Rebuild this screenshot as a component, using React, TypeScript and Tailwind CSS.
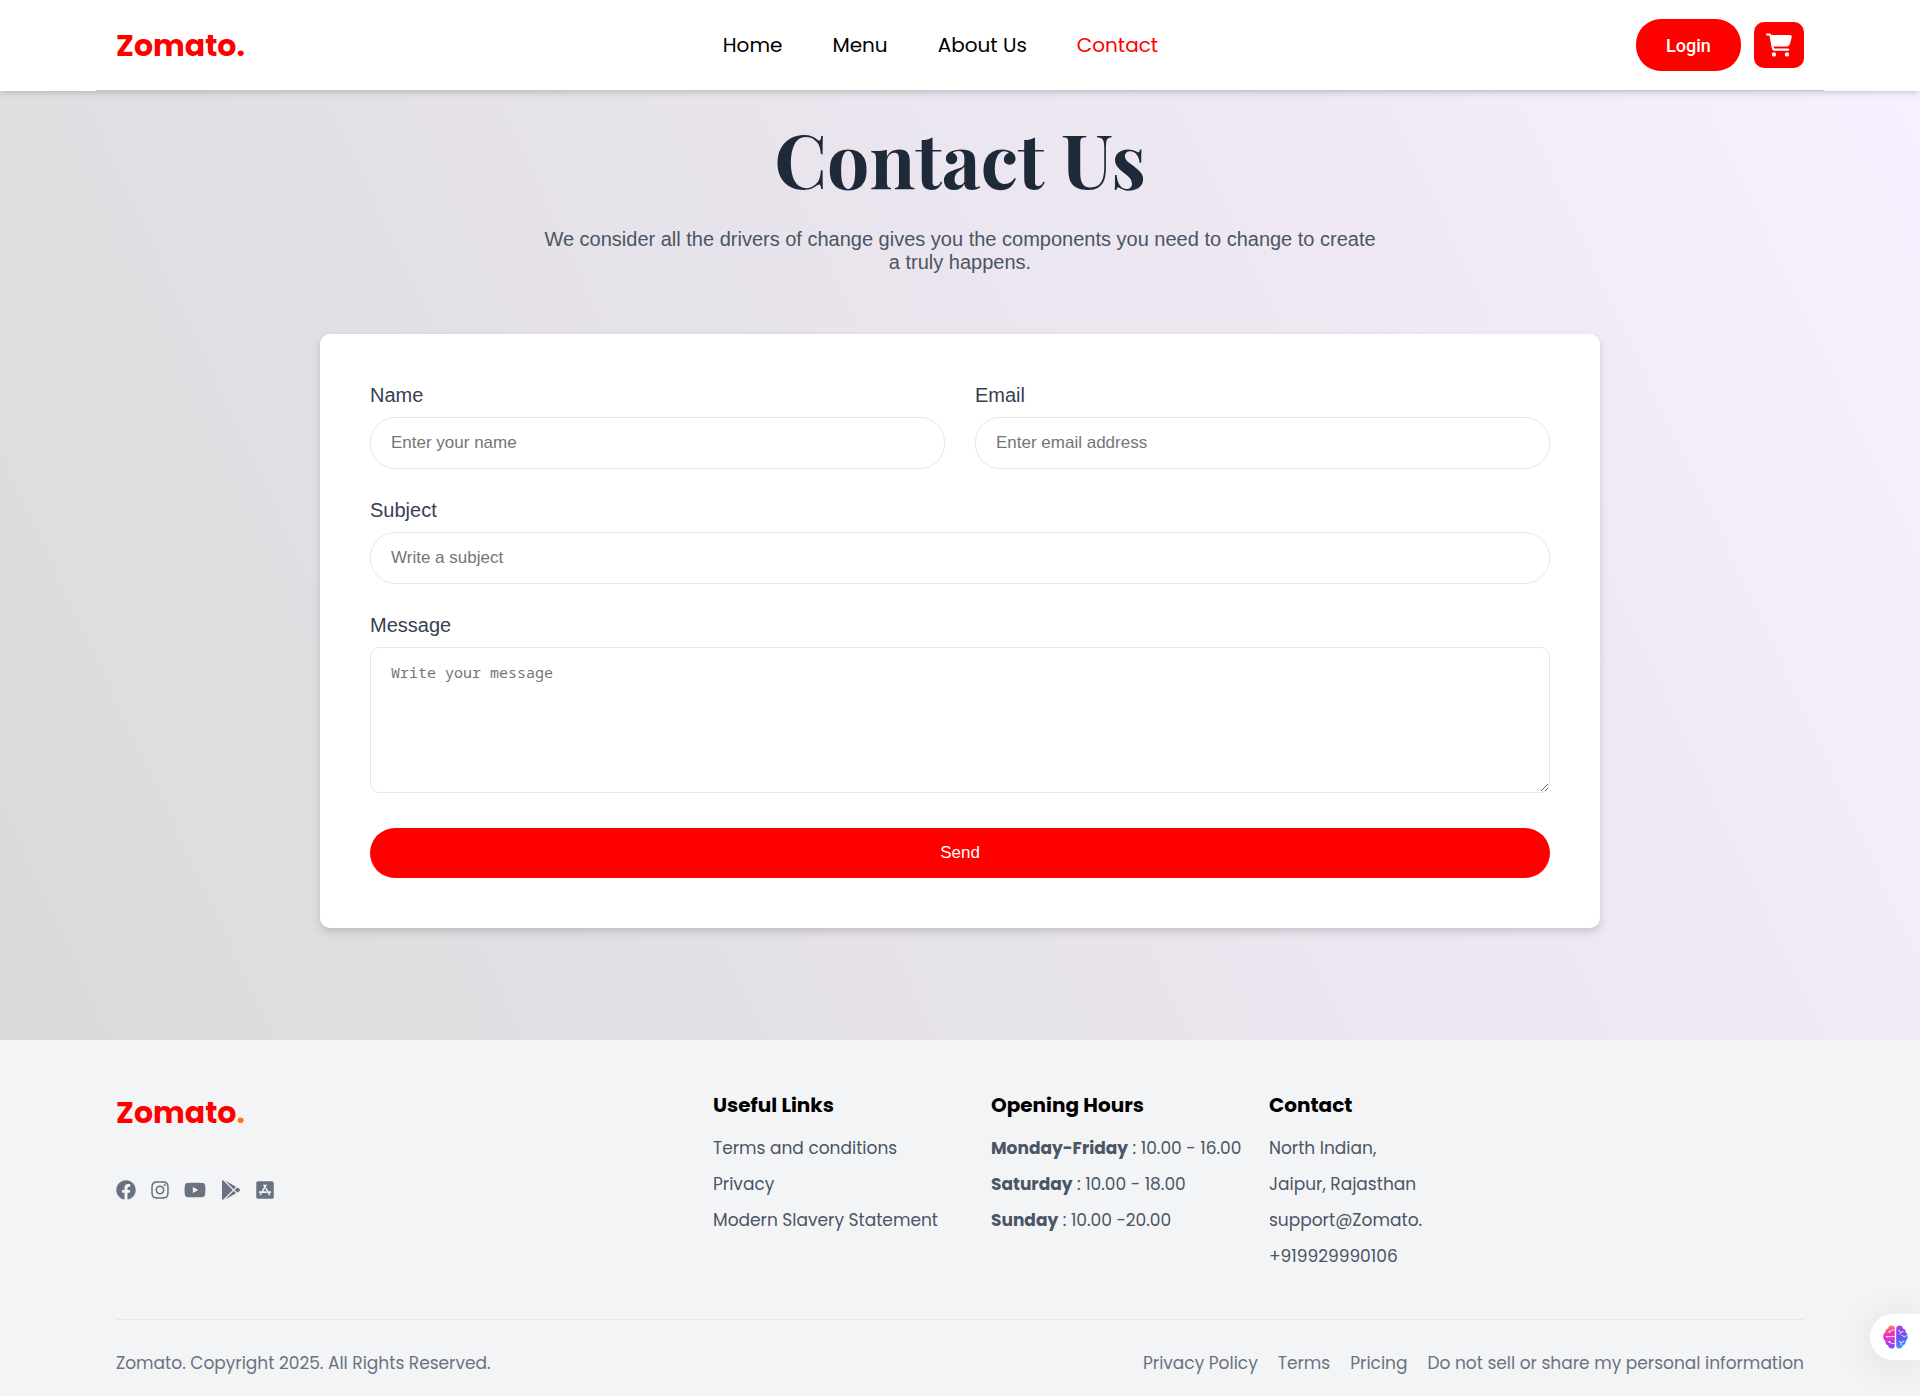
import type { ReactNode } from "react";
import { FaFacebook, FaInstagram, FaYoutube, FaGooglePlay, FaAppStoreIos } from "react-icons/fa";
import { FaCartShopping } from "react-icons/fa6";

const navLinks = ["Home", "Menu", "About Us", "Contact"];
const legalLinks = ["Privacy Policy", "Terms", "Pricing", "Do not sell or share my personal information"];
const usefulLinks = ["Terms and conditions", "Privacy", "Modern Slavery Statement"];
const hours = [
  ["Monday-Friday", " : 10.00 - 16.00"],
  ["Saturday", " : 10.00 - 18.00"],
  ["Sunday", " : 10.00 -20.00"],
];
const address = ["North Indian,", "Jaipur, Rajasthan", "support@Zomato.", "+919929990106"];
const socials = [
  { label: "Facebook", icon: <FaFacebook className="h-5 w-5" /> },
  { label: "Instagram", icon: <FaInstagram className="h-5 w-[18px]" /> },
  { label: "YouTube", icon: <FaYoutube className="h-5 w-[22px]" /> },
  { label: "Google Play", icon: <FaGooglePlay className="h-5 w-5" /> },
  { label: "App Store", icon: <FaAppStoreIos className="h-5 w-[18px]" /> },
];

function Header() {
  return (
    <header className="relative z-10 bg-white shadow-md">
      <div className="mx-24 flex h-[91px] items-center justify-between border-b border-[#c8c8c8] px-5">
        <a href="#" className="text-[30px] font-bold text-[#ff0000]">Zomato.</a>
        <nav className="flex gap-[50px] text-[20px]">
          {navLinks.map((l) => (
            <a key={l} href="#" className={l === "Contact" ? "text-[#ff0000]" : "text-black"}>{l}</a>
          ))}
        </nav>
        <div className="flex items-center gap-[13px]">
          <button className="h-[52px] w-[105px] rounded-[25px] bg-[#ff0000] font-[Roboto,sans-serif] text-[18px] font-medium text-white">Login</button>
          <button aria-label="Cart" className="flex h-[46px] w-[50px] items-center justify-center rounded-[10px] bg-[#ff0000] text-white">
            <FaCartShopping size={26} />
          </button>
        </div>
      </div>
    </header>
  );
}

const labelClass = "mb-[10px] block text-[20px] leading-[23px] text-gray-700";

function Field({ id, label, placeholder, type = "text" }: { id: string; label: string; placeholder: string; type?: string }) {
  return (
    <div>
      <label htmlFor={id} className={labelClass}>{label}</label>
      <input
        id={id}
        type={type}
        placeholder={placeholder}
        className="h-[52px] w-full rounded-[25px] border border-gray-200 bg-white px-5 text-[17px] text-gray-800 placeholder:text-[#757575]"
      />
    </div>
  );
}

function ContactSection() {
  return (
    <main className="bg-[linear-gradient(65deg,#dadada,#f0e9f5_75%,#f7f1ff)] px-5 pt-5 pb-28 font-['Liberation_Sans',Arial,sans-serif]">
      <h1 className="text-center font-['Playfair_Display','Liberation_Serif',serif] text-[75px] leading-[95px] font-bold text-gray-800">Contact Us</h1>
      <p className="mx-auto mt-[22px] max-w-[840px] text-center text-[20px] leading-[23px] text-gray-600">
        We consider all the drivers of change gives you the components you need to change to create a truly happens.
      </p>
      <form
        className="mx-auto mt-[60px] max-w-[1280px] rounded-[10px] bg-white p-[50px] shadow-[0_4px_8px_rgba(0,0,0,0.15)]"
        onSubmit={(e) => e.preventDefault()}
      >
        <div className="grid grid-cols-2 gap-[30px]">
          <Field id="name" label="Name" placeholder="Enter your name" />
          <Field id="email" label="Email" type="email" placeholder="Enter email address" />
          <div className="col-span-2">
            <Field id="subject" label="Subject" placeholder="Write a subject" />
          </div>
          <div className="col-span-2">
            <label htmlFor="message" className={labelClass}>Message</label>
            <textarea
              id="message"
              placeholder="Write your message"
              className="block h-[146px] w-full rounded-[10px] border border-gray-200 px-5 py-[15px] font-['Noto_Sans_Mono','DejaVu_Sans_Mono',monospace] text-[15px] leading-[18px] placeholder:text-[#757575]"
            />
          </div>
        </div>
        <button className="mt-[35px] block h-[50px] w-full rounded-[25px] bg-[#ff0000] text-[17px] text-white">Send</button>
      </form>
    </main>
  );
}

function Column({ title, children }: { title: string; children: ReactNode }) {
  return (
    <div className="text-[17px] whitespace-nowrap text-gray-600">
      <h2 className="mb-[17px] text-[20px] leading-7 font-bold text-black">{title}</h2>
      <ul className="flex flex-col gap-3 leading-6">{children}</ul>
    </div>
  );
}

function Footer() {
  return (
    <footer className="bg-gray-100 px-[116px] pt-[51px] pb-5">
      <div className="grid grid-cols-[577px_258px_258px_1fr] gap-5">
        <div>
          <a href="#" className="block text-[30px] leading-[44px] font-bold text-[#ff0000]">
            Zomato<span className="text-[#ff7a00]">.</span>
          </a>
          <div className="mt-[45px] flex gap-[15px] text-gray-500">
            {socials.map((s) => <a key={s.label} href="#" aria-label={s.label}>{s.icon}</a>)}
          </div>
        </div>
        <Column title="Useful Links">{usefulLinks.map((t) => <li key={t}><a href="#">{t}</a></li>)}</Column>
        <Column title="Opening Hours">{hours.map(([d, h]) => <li key={d}><strong className="font-bold">{d}</strong>{h}</li>)}</Column>
        <Column title="Contact">{address.map((t) => <li key={t}>{t}</li>)}</Column>
      </div>
      <div className="mt-[51px] flex justify-between border-t border-gray-200 pt-[30px] text-[17px] leading-[26px] text-gray-500">
        <p>Zomato. Copyright 2025. All Rights Reserved.</p>
        <nav className="flex gap-5">{legalLinks.map((t) => <a key={t} href="#">{t}</a>)}</nav>
      </div>
    </footer>
  );
}

function AssistantTab() {
  return (
    <button
      aria-label="Assistant"
      className="fixed right-0 bottom-9 z-20 flex h-[46px] w-[50px] items-center rounded-l-full bg-white pl-[13px] shadow-[0_4px_40px_rgba(0,0,0,0.1)]"
    >
      <svg viewBox="0 0 25 24" className="h-6 w-[25px]" fill="none">
        <defs>
          <linearGradient id="brainLeft" x1="2" y1="1" x2="11" y2="23" gradientUnits="userSpaceOnUse">
            <stop offset="0" stopColor="#ff9a2e" />
            <stop offset="0.35" stopColor="#f52fb0" />
            <stop offset="0.65" stopColor="#c93be0" />
            <stop offset="1" stopColor="#6a4df5" />
          </linearGradient>
          <linearGradient id="brainRight" x1="14" y1="1" x2="23" y2="23" gradientUnits="userSpaceOnUse">
            <stop offset="0" stopColor="#b63bea" />
            <stop offset="0.5" stopColor="#6a52f5" />
            <stop offset="1" stopColor="#2fa8ff" />
          </linearGradient>
        </defs>
        <path
          d="M11.8 3.2C11.6 1.3 10.2.5 8.6.5 6.6.5 5.3 1.8 5.1 3.4 3.2 3.8 2.1 5.3 2.4 7.2 1 8.2.3 9.6.3 11.6s.7 3.5 2.1 4.6c-.3 2 .8 3.7 2.7 4.2.4 1.8 1.7 3.1 3.6 3.1 1.7 0 3-.9 3.1-2.8z"
          fill="url(#brainLeft)"
        />
        <path
          d="M13.2 3.2C13.4 1.3 14.8.5 16.4.5c2 0 3.3 1.3 3.5 2.9 1.9.4 3 1.9 2.7 3.8 1.4 1 2.1 2.4 2.1 4.4s-.7 3.5-2.1 4.6c.3 2-.8 3.7-2.7 4.2-.4 1.8-1.7 3.1-3.6 3.1-1.7 0-3-.9-3.1-2.8z"
          fill="url(#brainRight)"
        />
        <g stroke="white" strokeOpacity="0.8" strokeWidth="1" strokeLinecap="round">
          <path d="M11.8 5H9.2L6.6 6.8M11.8 11.6H4M11.8 18.6H9L6.6 17" />
          <path d="M15.6 5.4l2.2 1.8 2.4-.6M17.8 7.2L17 9M24 10.6l-2.8 1-2.4-1.2M16 16l2 1.6 2.6-1.2M18 17.6v2.6" />
        </g>
        <g fill="white">
          <circle cx="6.4" cy="6.9" r="0.9" />
          <circle cx="3.8" cy="11.6" r="0.9" />
          <circle cx="6.4" cy="16.9" r="0.9" />
        </g>
      </svg>
    </button>
  );
}

export default function App() {
  return (
    <div className="font-[Poppins,Inter,sans-serif]">
      <Header />
      <ContactSection />
      <Footer />
      <AssistantTab />
    </div>
  );
}
